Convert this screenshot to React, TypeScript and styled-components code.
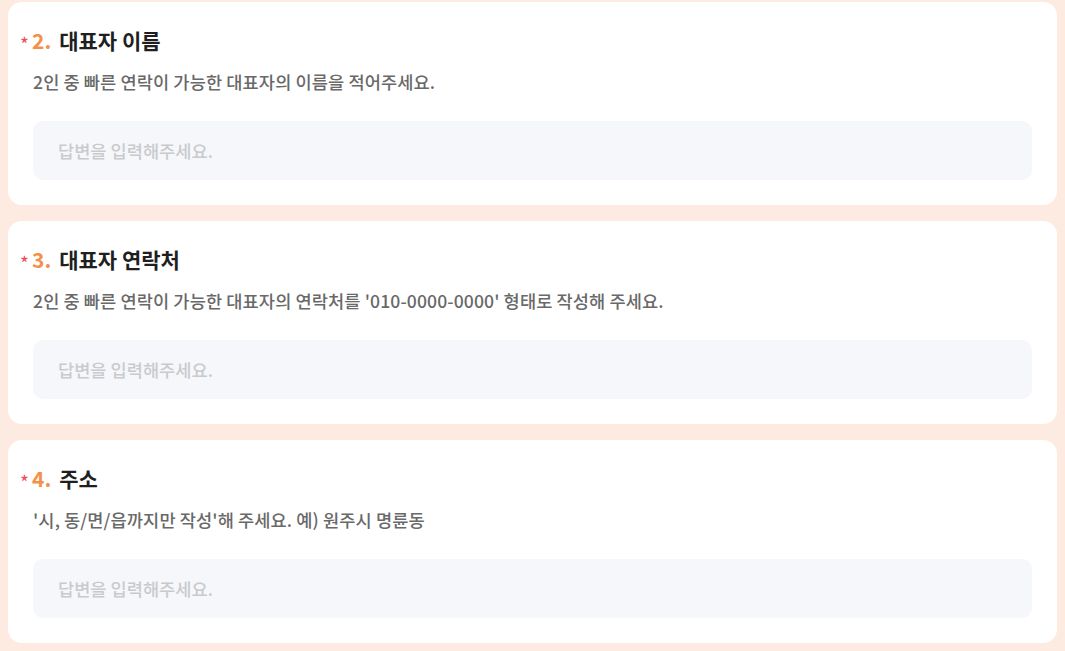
import styled, { createGlobalStyle } from "styled-components";

const GlobalStyle = createGlobalStyle`
  html, body {
    margin: 0;
    padding: 0;
    background-color: #fdebe1;
  }
  body {
    font-family: "Noto Sans CJK KR", "Noto Sans", sans-serif;
  }
`;

const Page = styled.div`
  display: flex;
  flex-direction: column;
  gap: 16px;
  padding: 2px 8px 8px;
`;

const Card = styled.section`
  background-color: #ffffff;
  border-radius: 14px;
  padding: 24px 25px 25px;
  display: flex;
  flex-direction: column;
`;

const TitleRow = styled.h2`
  margin: 0 0 0 -13px;
  display: flex;
  align-items: center;
  height: 28px;
  font-size: 21px;
  font-weight: 700;
  letter-spacing: 0;
  color: #1f1f1f;
`;

const Star = styled.span`
  color: #ee4c5a;
  font-size: 19px;
  font-weight: 400;
  width: 12px;
  margin-top: 6px;
`;

const Num = styled.span`
  color: #f5904a;
  margin-right: 8px;
`;

const Desc = styled.p`
  margin: 14px 0 0;
  font-size: 17.6px;
  font-weight: 500;
  letter-spacing: 0.1px;
  color: #696969;
  line-height: 28px;
`;

const Input = styled.input`
  margin-top: 25px;
  height: 59px;
  box-sizing: border-box;
  border: none;
  outline: none;
  border-radius: 10px;
  background-color: #f6f7fa;
  padding: 0 25px;
  font-family: inherit;
  font-size: 17.6px;
  font-weight: 500;
  letter-spacing: 0;
  color: #333;
  &::placeholder {
    color: #c9cacd;
  }
`;

const questions = [
  {
    no: 2,
    title: "대표자 이름",
    desc: "2인 중 빠른 연락이 가능한 대표자의 이름을 적어주세요.",
  },
  {
    no: 3,
    title: "대표자 연락처",
    desc: "2인 중 빠른 연락이 가능한 대표자의 연락처를 '010-0000-0000' 형태로 작성해 주세요.",
  },
  {
    no: 4,
    title: "주소",
    desc: "'시, 동/면/읍까지만 작성'해 주세요. 예) 원주시 명륜동",
  },
];

export default function App() {
  return (
    <>
      <GlobalStyle />
      <Page>
        {questions.map((q) => (
          <Card key={q.no}>
            <TitleRow>
              <Star>*</Star>
              <Num>{q.no}.</Num>
              {q.title}
            </TitleRow>
            <Desc>{q.desc}</Desc>
            <Input placeholder="답변을 입력해주세요." />
          </Card>
        ))}
      </Page>
    </>
  );
}
